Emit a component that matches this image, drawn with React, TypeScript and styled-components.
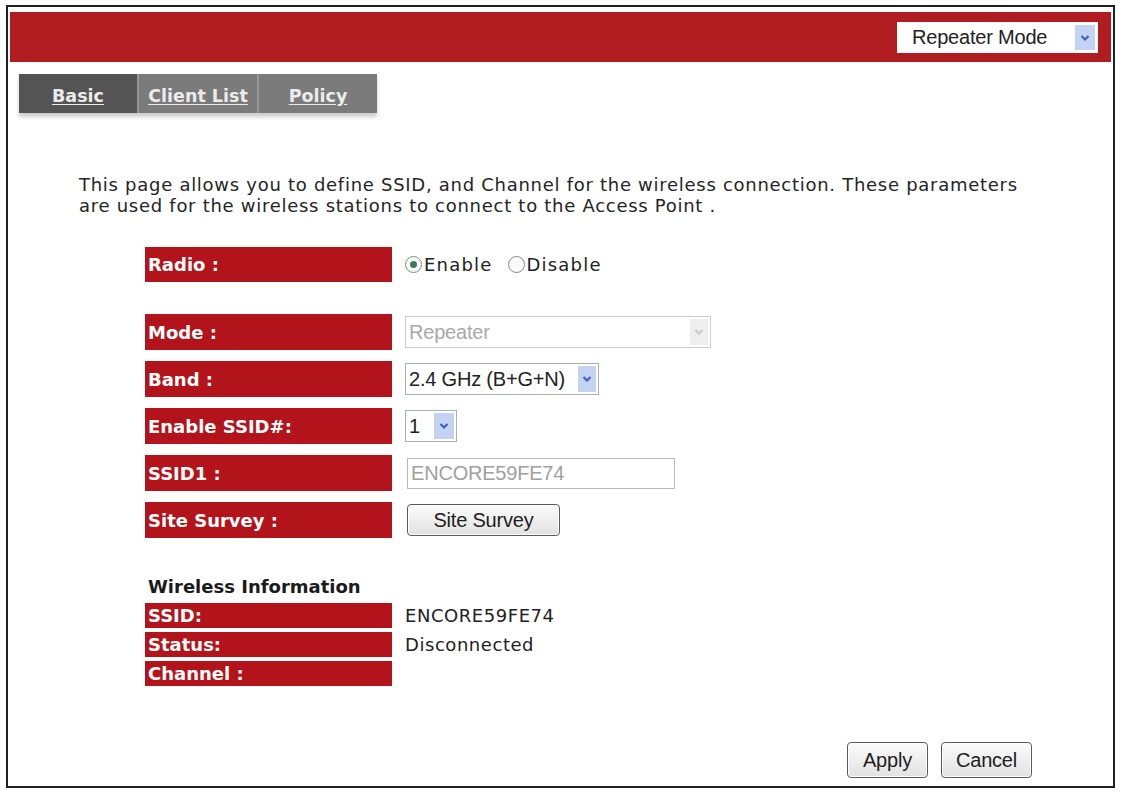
import React from "react";
import styled, { createGlobalStyle } from "styled-components";

const GlobalStyle = createGlobalStyle`
  html, body { margin: 0; padding: 0; background: #ffffff; }
  body { font-family: "DejaVu Sans", Verdana, sans-serif; color: #222; }
`;

const Frame = styled.div`
  box-sizing: border-box;
  margin: 5px 0 0 6px;
  width: 1109px;
  height: 783px;
  border: 2px solid #202020;
  padding: 5px 2px 0 2px;
  display: flex;
  flex-direction: column;
`;

const Header = styled.header`
  box-sizing: border-box;
  height: 50px;
  background: #b01c20;
  display: flex;
  justify-content: flex-end;
  align-items: flex-start;
  padding: 10px 13px 0 0;
`;

const SelectBox = styled.div<{ $w: number; $h?: number; $pad?: number; $disabled?: boolean; $plain?: boolean }>`
  box-sizing: border-box;
  width: ${(p) => p.$w}px;
  height: ${(p) => p.$h ?? 32}px;
  border: 1px solid ${(p) => (p.$plain ? "#ffffff" : p.$disabled ? "#cdcdcd" : "#a7aeb8")};
  background: #ffffff;
  display: flex;
  align-items: center;
  padding: 2px 2px 2px ${(p) => p.$pad ?? 3}px;
  font-family: "Liberation Sans", Arial, sans-serif;
  font-size: 20px;
  color: ${(p) => (p.$disabled ? "#a9a9a9" : "#222222")};
`;

const SelectValue = styled.span`
  flex: 1;
  white-space: nowrap;
  letter-spacing: -0.2px;
`;

const ArrowBox = styled.span<{ $w?: number; $disabled?: boolean }>`
  width: ${(p) => p.$w ?? 18}px;
  align-self: stretch;
  background: ${(p) => (p.$disabled ? "#eeeeee" : "#c4d3f1")};
  display: flex;
  align-items: center;
  justify-content: center;
`;

const Chevron: React.FC<{ color: string }> = ({ color }) => (
  <svg width="10" height="8" viewBox="0 0 10 8">
    <polyline points="1.5,2 5,5.5 8.5,2" fill="none" stroke={color} strokeWidth="2.2" />
  </svg>
);

const Select: React.FC<{
  value: string;
  w: number;
  h?: number;
  pad?: number;
  arrowW?: number;
  disabled?: boolean;
  plain?: boolean;
}> = ({ value, w, h, pad, arrowW, disabled, plain }) => (
  <SelectBox $w={w} $h={h} $pad={pad} $disabled={disabled} $plain={plain}>
    <SelectValue>{value}</SelectValue>
    <ArrowBox $w={arrowW} $disabled={disabled}>
      <Chevron color={disabled ? "#c9c9c9" : "#3c62c4"} />
    </ArrowBox>
  </SelectBox>
);

const TabBar = styled.nav`
  display: flex;
  align-self: flex-start;
  margin: 12px 0 0 9px;
  height: 39px;
  background: #7b7b7b;
  box-shadow: 0 4px 4px rgba(0, 0, 0, 0.2);
`;

const Tab = styled.a<{ $active?: boolean; $first?: boolean }>`
  box-sizing: border-box;
  width: ${(p) => (p.$first ? 118 : 120)}px;
  display: flex;
  align-items: center;
  justify-content: center;
  background: ${(p) => (p.$active ? "#545454" : "#7b7b7b")};
  border-left: ${(p) => (p.$first ? "none" : "2px solid #979797")};
  color: #ececec;
  font-weight: bold;
  font-size: 17.5px;
  text-decoration: underline;
  text-underline-offset: 2px;
  padding-top: 4px;
  cursor: pointer;
`;

const Intro = styled.p`
  margin: 61px 0 0 69px;
  font-size: 18px;
  line-height: 21px;
  letter-spacing: 0.72px;
  color: #252525;
  white-space: nowrap;
`;

const FieldRow = styled.div<{ $h: number; $mt: number }>`
  display: grid;
  grid-template-columns: 247px auto;
  column-gap: 13px;
  align-items: center;
  margin: ${(p) => p.$mt}px 0 0 135px;
  height: ${(p) => p.$h}px;
`;

const Label = styled.div`
  box-sizing: border-box;
  align-self: stretch;
  background: #b3131b;
  color: #ffffff;
  font-weight: bold;
  font-size: 18px;
  display: flex;
  align-items: center;
  padding-left: 3px;
  white-space: nowrap;
`;

const RadioGroup = styled.div`
  display: flex;
  align-items: center;
  font-size: 18px;
  letter-spacing: 1.2px;
  color: #222;
`;

const RadioOption = styled.label`
  display: flex;
  align-items: center;
  gap: 2px;
  margin-right: 15px;
`;

const RadioCircle = styled.span<{ $on?: boolean }>`
  box-sizing: border-box;
  width: 17px;
  height: 17px;
  border-radius: 50%;
  border: 1px solid #7f8a84;
  background: #fbfbfb;
  display: flex;
  align-items: center;
  justify-content: center;
  &::after {
    content: "";
    width: 7px;
    height: 7px;
    border-radius: 50%;
    background: ${(p) => (p.$on ? "#3e7a4c" : "transparent")};
  }
`;

const TextInput = styled.input`
  box-sizing: border-box;
  margin-left: 2px;
  width: 268px;
  height: 31px;
  border: 1px solid #b8b8b8;
  padding: 0 3px;
  font-family: "Liberation Sans", Arial, sans-serif;
  font-size: 20px;
  color: #a0a0a0;
  background: #fff;
  letter-spacing: -0.2px;
  outline: none;
`;

const Button = styled.button<{ $w: number; $h: number }>`
  box-sizing: border-box;
  width: ${(p) => p.$w}px;
  height: ${(p) => p.$h}px;
  border: 1px solid #5a5a5a;
  border-radius: 4px;
  background: linear-gradient(#fbfbfb, #e2e2e2);
  box-shadow: inset 0 0 0 1px #ffffff;
  font-family: "Liberation Sans", Arial, sans-serif;
  font-size: 20px;
  color: #1e1e1e;
  padding: 0;
  letter-spacing: -0.2px;
  cursor: pointer;
`;

const SurveyButton = styled(Button)`
  margin-left: 2px;
`;

const SectionTitle = styled.h3`
  margin: 39px 0 0 138px;
  font-size: 18px;
  line-height: 20px;
  font-weight: bold;
  color: #1b1b1b;
`;

const InfoValue = styled.span`
  font-size: 18px;
  letter-spacing: 0.55px;
  color: #222;
`;

const ActionBar = styled.div`
  display: flex;
  justify-content: flex-end;
  gap: 13px;
  margin-top: 56px;
  padding-right: 79px;
`;

export default function App() {
  return (
    <>
      <GlobalStyle />
      <Frame>
        <Header>
          <Select value="Repeater Mode" w={201} h={31} pad={14} arrowW={20} plain />
        </Header>

        <TabBar>
          <Tab $active $first>Basic</Tab>
          <Tab>Client List</Tab>
          <Tab>Policy</Tab>
        </TabBar>

        <Intro>
          This page allows you to define SSID, and Channel for the wireless connection. These parameters
          <br />
          are used for the wireless stations to connect to the Access Point .
        </Intro>

        <FieldRow $h={35} $mt={31}>
          <Label>Radio :</Label>
          <RadioGroup>
            <RadioOption>
              <RadioCircle $on />
              Enable
            </RadioOption>
            <RadioOption>
              <RadioCircle />
              Disable
            </RadioOption>
          </RadioGroup>
        </FieldRow>

        <FieldRow $h={36} $mt={32}>
          <Label>Mode :</Label>
          <Select value="Repeater" w={306} disabled />
        </FieldRow>

        <FieldRow $h={36} $mt={11}>
          <Label>Band :</Label>
          <Select value="2.4 GHz (B+G+N)" w={194} />
        </FieldRow>

        <FieldRow $h={36} $mt={11}>
          <Label>Enable SSID#:</Label>
          <Select value="1" w={52} arrowW={20} />
        </FieldRow>

        <FieldRow $h={36} $mt={11}>
          <Label>SSID1 :</Label>
          <TextInput readOnly value="ENCORE59FE74" />
        </FieldRow>

        <FieldRow $h={36} $mt={11}>
          <Label>Site Survey :</Label>
          <div>
            <SurveyButton $w={153} $h={32}>Site Survey</SurveyButton>
          </div>
        </FieldRow>

        <SectionTitle>Wireless Information</SectionTitle>

        <FieldRow $h={25} $mt={6}>
          <Label>SSID:</Label>
          <InfoValue>ENCORE59FE74</InfoValue>
        </FieldRow>
        <FieldRow $h={25} $mt={4}>
          <Label>Status:</Label>
          <InfoValue>Disconnected</InfoValue>
        </FieldRow>
        <FieldRow $h={25} $mt={4}>
          <Label>Channel :</Label>
          <InfoValue />
        </FieldRow>

        <ActionBar>
          <Button $w={81} $h={36}>Apply</Button>
          <Button $w={91} $h={36}>Cancel</Button>
        </ActionBar>
      </Frame>
    </>
  );
}
